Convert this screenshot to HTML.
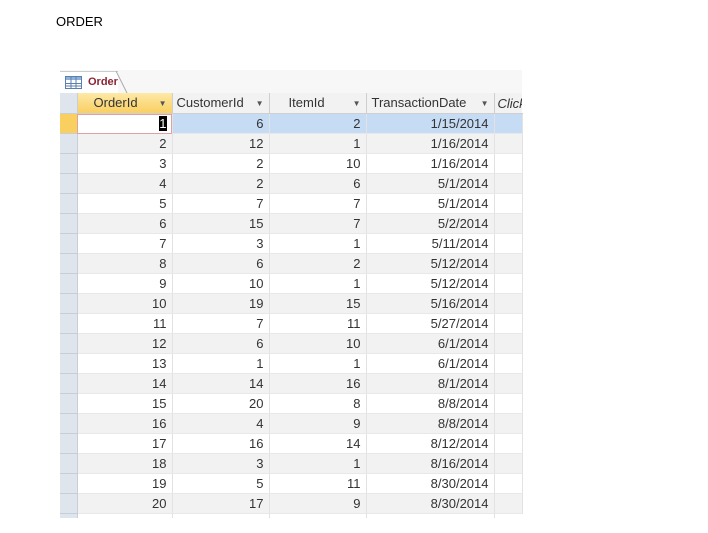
<!DOCTYPE html>
<html><head><meta charset="utf-8"><style>
body{margin:0;width:708px;height:533px;background:#fff;font-family:"Liberation Sans",sans-serif;position:relative;overflow:hidden}
.title{position:absolute;left:56px;top:14px;font-size:13px;color:#000}
.tabbar{position:absolute;left:60px;top:70px;width:462px;height:23px;background:#f7f7f7}
.tab{position:absolute;left:60px;top:71px;width:58px;height:22px;background:#fff;border-top:1px solid #ccc}
.tab span{position:absolute;left:28px;top:4px;font-size:11px;color:#8b2232;font-weight:bold}
.tab svg{position:absolute;left:5px;top:4px}
.slant{position:absolute;left:116px;top:71px}
table{position:absolute;left:60px;top:93px;width:462px;border-collapse:collapse;table-layout:fixed;font-size:13px;color:#333}
td{height:19px;padding:0 5px 0 0;text-align:right;border-right:1px solid #e2e2e2;border-bottom:1px solid #e8e8e8;white-space:nowrap;overflow:hidden;line-height:19px}
tr.h td{background:#f2f2f2;border-bottom:1px solid #cfcfcf;border-right:1px solid #cfcfcf;font-size:13px;color:#333}
tr.h td.o{background:linear-gradient(#fde9a8,#f9cf60)}
tr.g td{background:#f2f2f2}
tr.sel td{background:#c6dcf5}
tr td.s{background:#dfe5ec;border-right:1px solid #c7ced8;border-bottom:1px solid #c7ced8;padding:0}
tr.sel td.s{background:#f9cf60}
tr.sel td.o{background:#fff;outline:1px solid #e2a0a0;outline-offset:-1px}
.dd{font-size:8px;color:#555;float:right;margin-top:1px}
.tail{position:absolute;left:60px;top:514px;width:17px;height:4px;background:#dfe5ec;border-right:1px solid #c7ced8}
.tl{position:absolute;top:514px;height:4px;width:1px;background:#e2e2e2}
</style></head><body>
<div class="title">ORDER</div>
<div class="tabbar"></div>
<div class="tab"><svg width="17" height="13" viewBox="0 0 17 13"><rect x="0.5" y="0.5" width="16" height="12" fill="#fff" stroke="#5b7fb0"/><rect x="1" y="1" width="15" height="3" fill="#8fb0d8"/><path d="M1 7.5H16M1 10H16M6 1V12M11 1V12" stroke="#5b7fb0" stroke-width="1"/></svg><span>Order</span></div>
<svg class="slant" width="12" height="22"><path d="M0 0 L11 22" stroke="#aaa" fill="none"/></svg>
<table>
<colgroup><col style="width:17px"><col style="width:95px"><col style="width:97px"><col style="width:97px"><col style="width:128px"><col style="width:28px"></colgroup>
<tr class="h"><td class="s"></td><td class="o" style="text-align:left;padding-left:16px">OrderId<span class="dd">▼</span></td><td style="text-align:left;padding-left:4px">CustomerId <span class="dd">▼</span></td><td style="text-align:left;padding-left:19px">ItemId<span class="dd">▼</span></td><td style="text-align:left;padding-left:5px">TransactionDate <span class="dd">▼</span></td><td style="text-align:left;padding-left:3px;font-style:italic;border-right:none">Click</td></tr>
<tr class="sel"><td class="s"></td><td class="o"><span style="background:#000;color:#fff">1</span></td><td>6</td><td>2</td><td>1/15/2014</td><td></td></tr>
<tr class="g"><td class="s"></td><td>2</td><td>12</td><td>1</td><td>1/16/2014</td><td></td></tr>
<tr><td class="s"></td><td>3</td><td>2</td><td>10</td><td>1/16/2014</td><td></td></tr>
<tr class="g"><td class="s"></td><td>4</td><td>2</td><td>6</td><td>5/1/2014</td><td></td></tr>
<tr><td class="s"></td><td>5</td><td>7</td><td>7</td><td>5/1/2014</td><td></td></tr>
<tr class="g"><td class="s"></td><td>6</td><td>15</td><td>7</td><td>5/2/2014</td><td></td></tr>
<tr><td class="s"></td><td>7</td><td>3</td><td>1</td><td>5/11/2014</td><td></td></tr>
<tr class="g"><td class="s"></td><td>8</td><td>6</td><td>2</td><td>5/12/2014</td><td></td></tr>
<tr><td class="s"></td><td>9</td><td>10</td><td>1</td><td>5/12/2014</td><td></td></tr>
<tr class="g"><td class="s"></td><td>10</td><td>19</td><td>15</td><td>5/16/2014</td><td></td></tr>
<tr><td class="s"></td><td>11</td><td>7</td><td>11</td><td>5/27/2014</td><td></td></tr>
<tr class="g"><td class="s"></td><td>12</td><td>6</td><td>10</td><td>6/1/2014</td><td></td></tr>
<tr><td class="s"></td><td>13</td><td>1</td><td>1</td><td>6/1/2014</td><td></td></tr>
<tr class="g"><td class="s"></td><td>14</td><td>14</td><td>16</td><td>8/1/2014</td><td></td></tr>
<tr><td class="s"></td><td>15</td><td>20</td><td>8</td><td>8/8/2014</td><td></td></tr>
<tr class="g"><td class="s"></td><td>16</td><td>4</td><td>9</td><td>8/8/2014</td><td></td></tr>
<tr><td class="s"></td><td>17</td><td>16</td><td>14</td><td>8/12/2014</td><td></td></tr>
<tr class="g"><td class="s"></td><td>18</td><td>3</td><td>1</td><td>8/16/2014</td><td></td></tr>
<tr><td class="s"></td><td>19</td><td>5</td><td>11</td><td>8/30/2014</td><td></td></tr>
<tr class="g"><td class="s"></td><td>20</td><td>17</td><td>9</td><td>8/30/2014</td><td></td></tr>
</table>
<div class="tail"></div>
<div class="tl" style="left:172px"></div><div class="tl" style="left:269px"></div><div class="tl" style="left:366px"></div><div class="tl" style="left:494px"></div>
</body></html>
